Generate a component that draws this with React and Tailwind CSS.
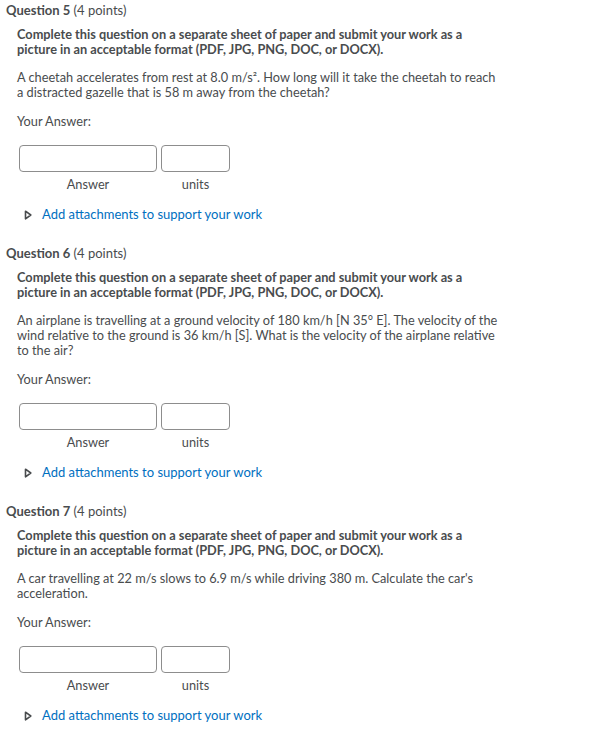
import React from "react";

const questions = [
  {
    n: 5,
    text: [
      <>A cheetah accelerates from rest at 8.0 m/s². How long will it take the cheetah to reach</>,
      <>a distracted gazelle that is 58 m away from the cheetah?</>,
    ],
  },
  {
    n: 6,
    text: [
      <>An airplane is travelling at a ground velocity of 180 km/h [N 35° E]. The velocity of the</>,
      <>wind relative to the ground is 36 km/h [S]. What is the velocity of the airplane relative</>,
      <>to the air?</>,
    ],
  },
  {
    n: 7,
    text: [
      <>A car travelling at 22 m/s slows to 6.9 m/s while driving 380 m. Calculate the car's</>,
      <>acceleration.</>,
    ],
  },
];

function Triangle() {
  return (
    <svg width="8" height="10" viewBox="0 0 8 10" className="block">
      <path d="M1.5 1.2 L6.8 5 L1.5 8.8 Z" fill="none" stroke="#494c4e" strokeWidth="1.6" strokeLinejoin="round" />
    </svg>
  );
}

function Question({ q }) {
  return (
    <div className="flex flex-col">
      <div className="pl-[6px] text-[13px] leading-[16px]">
        <span className="font-bold">Question {q.n}</span> (4 points)
      </div>
      <div className="pl-[17px] pt-[9px] text-[12.75px] leading-[15px] font-bold">
        <div>Complete this question on a separate sheet of paper and submit your work as a</div>
        <div>picture in an acceptable format (PDF, JPG, PNG, DOC, or DOCX).</div>
      </div>
      <div className="pl-[17px] pt-[13px] text-[12.75px] leading-[15px]">
        {q.text.map((t, i) => (
          <div key={i}>{t}</div>
        ))}
      </div>
      <div className="pl-[17px] pt-[14px] text-[12.75px] leading-[15px]">Your Answer:</div>
      <div className="pl-[19px] pt-[16px] flex gap-[4px]">
        <div className="flex flex-col items-center">
          <div className="w-[138px] h-[27px] border border-[#8d8d8d] rounded-[4px] bg-white" />
          <div className="pt-[5px] text-[12.75px] leading-[15px]">Answer</div>
        </div>
        <div className="flex flex-col items-center">
          <div className="w-[69px] h-[27px] border border-[#8d8d8d] rounded-[4px] bg-white" />
          <div className="pt-[5px] text-[12.75px] leading-[15px]">units</div>
        </div>
      </div>
      <div className="pl-[24px] pt-[15px] flex items-center gap-[10px] text-[13px] leading-[15px]">
        <Triangle />
        <span className="text-[#006fbf]">Add attachments to support your work</span>
      </div>
    </div>
  );
}

export default function App() {
  return (
    <div
      className="w-[599px] h-[730px] bg-white text-[#494c4e] pt-[2px] flex flex-col gap-[23px] overflow-hidden"
      style={{ fontFamily: "Lato, 'Liberation Sans', sans-serif" }}
    >
      {questions.map((q) => (
        <Question key={q.n} q={q} />
      ))}
    </div>
  );
}
